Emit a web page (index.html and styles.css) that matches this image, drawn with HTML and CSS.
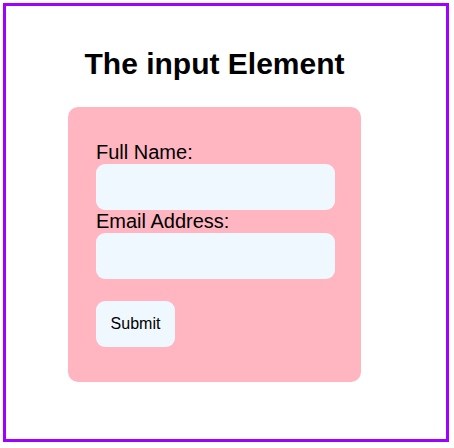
FILE: index.html
```html
<!DOCTYPE html>
<html>
<head>
<meta charset="utf-8">
<link rel="stylesheet" href="styles.css">
</head>
<body>
<div class="frame">
  <div class="wrap">
    <h1 class="title">The input Element</h1>
    <form class="card">
      <label class="label" for="name">Full Name:</label>
      <input class="field" id="name" type="text">
      <label class="label" for="email">Email Address:</label>
      <input class="field" id="email" type="email">
      <button class="submit" type="button">Submit</button>
    </form>
  </div>
</div>
</body>
</html>
```
FILE: styles.css
```css
html, body {
  margin: 0;
  padding: 0;
  background: #ffffff;
}
body {
  font-family: "Liberation Sans", Arial, sans-serif;
  color: #000;
}
.frame {
  margin: 3px;
  width: 440px;
  height: 433px;
  border: 3px solid #a000ff;
}
.wrap {
  margin-left: 62px;
  width: 293px;
  display: flex;
  flex-direction: column;
}
.title {
  margin: 41px 0 0 0;
  font-size: 30px;
  line-height: 34px;
  font-weight: bold;
  text-align: center;
}
.card {
  margin-top: 26px;
  background: #ffb6c1;
  border-radius: 10px;
  padding: 34px 28px 35px 28px;
  display: flex;
  flex-direction: column;
  align-items: flex-start;
}
.label {
  font-size: 20px;
  line-height: 23px;
  display: block;
}
.field {
  display: block;
  box-sizing: border-box;
  width: 239px;
  height: 46px;
  margin: 0;
  border: none;
  border-radius: 9px;
  background: #f0f8ff;
  outline: none;
}
.submit {
  margin-top: 22px;
  box-sizing: border-box;
  width: 79px;
  height: 46px;
  border: none;
  border-radius: 9px;
  background: #f0f8ff;
  font-family: "Liberation Sans", Arial, sans-serif;
  font-size: 16px;
  color: #000;
  padding: 0;
}
```
